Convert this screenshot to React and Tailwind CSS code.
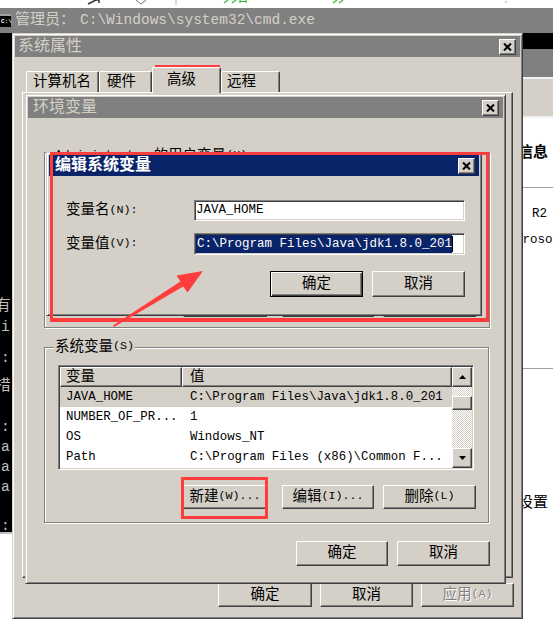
import React from "react";

const FONT = "font-['Liberation_Mono','Noto_Sans_CJK_SC',monospace]";
const WIN =
  "border border-t-[#d4d0c8] border-l-[#d4d0c8] border-r-[#404040] border-b-[#404040] shadow-[inset_1px_1px_0_#ffffff,inset_-1px_-1px_0_#808080] bg-[#d4d0c8]";
const BTN =
  "border border-t-white border-l-white border-r-[#404040] border-b-[#404040] shadow-[inset_-1px_-1px_0_#808080] bg-[#d4d0c8]";
const DEF_BTN =
  "border border-black shadow-[inset_1px_1px_0_#ffffff,inset_-1px_-1px_0_#404040,inset_-2px_-2px_0_#808080] bg-[#d4d0c8]";
const SUNKEN =
  "border border-t-[#808080] border-l-[#808080] border-r-white border-b-white shadow-[inset_1px_1px_0_#404040,inset_-1px_-1px_0_#d4d0c8] p-[1px]";
const GROUP =
  "relative border border-[#808080] shadow-[inset_1px_1px_0_#ffffff,1px_1px_0_#ffffff]";

// CJK glyphs are wider than the mono latin ones in the original bitmap font
function Zh({ children, className = "" }) {
  return <span className={`text-[14.5px] leading-none ${className}`}>{children}</span>;
}
function En({ children, className = "" }) {
  return <span className={`text-[11.7px] leading-none ${className}`}>{children}</span>;
}

function Button({ children, className = "", primary = false }) {
  return (
    <div className={`flex items-center justify-center ${primary ? DEF_BTN : BTN} ${className}`}>
      {children}
    </div>
  );
}

function CloseBox() {
  return (
    <div className={`flex items-center justify-center w-[17px] h-[16px] ${BTN}`}>
      <svg width="9" height="8" viewBox="0 0 9 8">
        <path d="M1 0.5 L8 7.5 M8 0.5 L1 7.5" stroke="#000" strokeWidth="2" />
      </svg>
    </div>
  );
}

function TitleBar({ title, active = false, className = "" }) {
  return (
    <div
      className={`flex items-center justify-between h-[21px] pr-[4px] shrink-0 ${
        active ? "bg-[#0a246a] text-white font-bold" : "bg-[#808080] text-[#d4d0c8]"
      } ${className}`}
    >
      <span className="text-[16px] leading-none">{title}</span>
      <CloseBox />
    </div>
  );
}

function Arrow({ down = false }) {
  return (
    <svg width="7" height="4" viewBox="0 0 7 4">
      {down ? <path d="M0 0 H7 L3.5 4 Z" fill="#000" /> : <path d="M0 4 H7 L3.5 0 Z" fill="#000" />}
    </svg>
  );
}

function TopStrip() {
  return (
    <svg className="absolute left-0 top-0" width="553" height="8" viewBox="0 0 553 8">
      <path d="M88 4 L96 0 M94 0 L99 0 L99 3" stroke="#333" strokeWidth="1.5" fill="none" />
      <path d="M136 0 L141 4 L146 0" stroke="#777" strokeWidth="1" fill="none" />
      <path d="M176 0 V5" stroke="#bbb" strokeWidth="1" />
      <path d="M224 3 L228 0 M232 3 L236 0 M240 0 V3 M246 0 V3 M240 1.5 H246" stroke="#3bb33b" strokeWidth="1.2" fill="none" />
      <path d="M333 3 L337 0 M339 3 L343 0" stroke="#3bb33b" strokeWidth="1.2" fill="none" />
      <path d="M505 3 L507 1" stroke="#999" strokeWidth="1" />
    </svg>
  );
}

function CmdWindow() {
  return (
    <div className="absolute left-0 top-[8px] w-[600px] h-[526px] bg-black flex flex-col border-b-2 border-b-[#c0c0c0]">
      <div className="h-[25px] bg-[#808080] flex items-center text-[#d4d0c8] shrink-0">
        <div className="w-[11px] h-[13px] bg-black border-t-2 border-t-[#a0a0a0] flex items-end pl-[1px] pb-[2px]">
          <span className="text-[6px] leading-none text-white font-bold">C:\</span>
        </div>
        <span className="ml-[4px] text-[15px] leading-none">管理员：</span>
        <span className="ml-[5px] text-[14.5px] leading-none">C:\Windows\system32\cmd.exe</span>
      </div>
      <div className="flex flex-col pt-[263px] text-[#c0c0c0] text-[14.5px] leading-none">
        <div className="h-[20px] flex items-center -ml-[4px]">有</div>
        <div className="h-[20px] flex items-center mt-[1px] pl-[1px]">i</div>
        <div className="h-[20px] flex items-center mt-[11px] pl-[1px]">:</div>
        <div className="h-[20px] flex items-center mt-[8px] -ml-[4px]">措</div>
        <div className="h-[20px] flex items-center mt-[21px] pl-[1px]">:</div>
        <div className="h-[20px] flex items-center pl-[1px]">a</div>
        <div className="h-[20px] flex items-center pl-[1px]">a</div>
        <div className="h-[20px] flex items-center pl-[1px]">a</div>
        <div className="h-[20px] flex items-center mt-[19px] pl-[1px]">:</div>
      </div>
    </div>
  );
}

function SideWindow() {
  return (
    <div className="absolute left-[470px] top-[49px] w-[100px] h-[580px] bg-white flex flex-col">
      <div className="h-[28px] bg-[#808080] shrink-0" />
      <div className="h-[41px] bg-[#d4d0c8] border-t-2 border-t-[#f0f0f0] border-b-2 border-b-[#eeeeee] shrink-0" />
      <div className="mt-[27px] ml-[48px] h-[16px] flex items-center">
        <span className="text-[15px] font-bold leading-none">信息</span>
      </div>
      <div className="mt-[26px] h-px bg-[#a0a0a0]" />
      <div className="mt-[18px] ml-[62px] h-[16px] flex items-center text-[12.5px] leading-none">R2</div>
      <div className="mt-[10px] ml-[30px] h-[16px] flex items-center text-[12.5px] leading-none">Microsoft</div>
      <div className="mt-[120px] h-px bg-[#a0a0a0]" />
      <div className="mt-[126px] ml-[48px] h-[16px] flex items-center">
        <span className="text-[15px] leading-none">设置</span>
      </div>
    </div>
  );
}

function Tab({ children, className = "", selected = false }) {
  return (
    <div
      className={`flex items-center border border-b-0 border-t-white border-l-white border-r-[#404040] rounded-t-[2px] shadow-[inset_-1px_0_0_#808080] bg-[#d4d0c8] ${
        selected ? "h-[26px] -mb-px relative z-10" : "h-[21px]"
      } ${className}`}
    >
      {children}
    </div>
  );
}

function SystemProperties() {
  return (
    <div className={`absolute left-[12px] top-[33px] w-[511px] h-[586px] p-[2px] flex flex-col ${WIN}`}>
      <TitleBar title="系统属性" className="pl-[3px]" />
      <div className="mt-[10px] h-[25px] ml-[11px] flex items-end shrink-0">
        <Tab className="w-[73px] pl-[6px]"><Zh>计算机名</Zh></Tab>
        <Tab className="w-[53px] pl-[7px]"><Zh>硬件</Zh></Tab>
        <Tab className="w-[69px] pl-[14px]" selected><Zh>高级</Zh></Tab>
        <Tab className="w-[59px] pl-[5px]"><Zh>远程</Zh></Tab>
      </div>
      <div className={`ml-[7px] w-[491px] h-[486px] shrink-0 ${BTN}`} />
      <div className="mt-[5px] flex justify-end pr-[6px] gap-[8px]">
        <Button className="w-[94px] h-[24px]"><Zh>确定</Zh></Button>
        <Button className="w-[93px] h-[24px]"><Zh>取消</Zh></Button>
        <Button className="w-[93px] h-[24px] text-[#808080] [text-shadow:1px_1px_0_#ffffff]">
          <Zh>应用</Zh>
          <En>(A)</En>
        </Button>
      </div>
    </div>
  );
}

const rows = [
  { name: "JAVA_HOME", value: "C:\\Program Files\\Java\\jdk1.8.0_201", selected: true },
  { name: "NUMBER_OF_PR...", value: "1" },
  { name: "OS", value: "Windows_NT" },
  { name: "Path", value: "C:\\Program Files (x86)\\Common F..." },
];

function GroupButtons() {
  return (
    <div className="flex ml-[138px] h-[24px]">
      <Button className="w-[84px] h-[24px]"><Zh>新建</Zh><En>(W)...</En></Button>
      <Button className="ml-[15px] w-[92px] h-[24px]"><Zh>编辑</Zh><En>(I)...</En></Button>
      <Button className="ml-[9px] w-[93px] h-[24px]"><Zh>删除</Zh><En>(L)</En></Button>
    </div>
  );
}

function EnvVariables() {
  return (
    <div className={`absolute left-[25px] top-[94px] w-[481px] h-[490px] p-[2px] flex flex-col ${WIN}`}>
      <TitleBar title="环境变量" className="pl-[5px]" />

      <div className={`mt-[34px] ml-[16px] w-[446px] h-[176px] shrink-0 flex flex-col justify-end pb-[10px] ${GROUP}`}>
        <div className="absolute -top-[5px] left-[9px] h-[16px] px-[1px] bg-[#d4d0c8] flex items-center">
          <En className="text-[12px]">Administrator</En>
          <Zh className="ml-[5px]">的用户变量</Zh>
          <En>(U)</En>
        </div>
        <GroupButtons />
      </div>

      <div className={`mt-[19px] ml-[16px] w-[445px] h-[176px] shrink-0 flex flex-col ${GROUP}`}>
        <div className="absolute -top-[9px] left-[9px] h-[16px] px-[1px] bg-[#d4d0c8] flex items-center">
          <Zh>系统变量</Zh>
          <En>(S)</En>
        </div>
        <div className={`mt-[17px] ml-[13px] w-[416px] h-[105px] bg-white flex ${SUNKEN}`}>
          <div className="flex-1 flex flex-col">
            <div className="flex h-[20px] shrink-0">
              <div className={`w-[122px] flex items-center pl-[5px] ${BTN}`}><Zh>变量</Zh></div>
              <div className={`flex-1 flex items-center pl-[7px] ${BTN}`}><Zh>值</Zh></div>
            </div>
            {rows.map((r) => (
              <div
                key={r.name}
                className={`flex h-[20px] items-center text-[12.4px] leading-none ${
                  r.selected ? "bg-[#d4d0c8]" : ""
                }`}
              >
                <div className="w-[122px] pl-[6px]">{r.name}</div>
                <div className="pl-[8px] whitespace-nowrap">{r.value}</div>
              </div>
            ))}
          </div>
          <div className="w-[20px] flex flex-col">
            <div className={`h-[20px] flex items-center justify-center ${BTN}`}><Arrow /></div>
            <div className="flex-1 pt-[9px] bg-[repeating-conic-gradient(#d4d0c8_0%_25%,#ffffff_0%_50%)] bg-[length:2px_2px]">
              <div className={`h-[14px] ${BTN}`} />
            </div>
            <div className={`h-[20px] flex items-center justify-center ${BTN}`}><Arrow down /></div>
          </div>
        </div>
        <div className="mt-[15px]">
          <GroupButtons />
        </div>
      </div>

      <div className="mt-[18px] flex justify-end pr-[13px] gap-[9px]">
        <Button className="w-[92px] h-[25px]"><Zh>确定</Zh></Button>
        <Button className="w-[93px] h-[25px]"><Zh>取消</Zh></Button>
      </div>
    </div>
  );
}

function EditVariable() {
  return (
    <div className={`absolute left-[46px] top-[152px] w-[436px] h-[164px] p-[2px] flex flex-col ${WIN}`}>
      <TitleBar title="编辑系统变量" active className="pl-[6px]" />
      <div className="mt-[24px] pl-[17px] flex flex-col">
        <div className="flex items-center h-[21px]">
          <div className="w-[128px] flex items-center">
            <Zh>变量名</Zh>
            <En>(N):</En>
          </div>
          <div className={`w-[271px] h-[21px] bg-white flex items-center pl-[1px] text-[12.5px] leading-none ${SUNKEN}`}>
            JAVA_HOME
          </div>
        </div>
        <div className="flex items-center h-[22px] mt-[12px]">
          <div className="w-[128px] flex items-center">
            <Zh>变量值</Zh>
            <En>(V):</En>
          </div>
          <div className={`w-[271px] h-[22px] bg-white flex items-stretch text-[12.5px] leading-none ${SUNKEN}`}>
            <span className="bg-[#0a246a] text-white flex items-center pl-[1px] whitespace-nowrap">
              C:\Program Files\Java\jdk1.8.0_201
            </span>
            <span className="w-px bg-black my-[1px]" />
          </div>
        </div>
        <div className="mt-[16px] flex justify-end pr-[14px] gap-[9px]">
          <Button primary className="w-[93px] h-[26px]"><Zh>确定</Zh></Button>
          <Button className="w-[93px] h-[26px]"><Zh>取消</Zh></Button>
        </div>
      </div>
    </div>
  );
}

function Annotations() {
  return (
    <>
      <div className="absolute left-[155px] top-[65px] w-[65px] h-[26px] border-[3px] border-[#ff3d3d]" />
      <div className="absolute left-[50px] top-[152px] w-[439px] h-[170px] border-[3px] border-b-4 border-[#ff3d3d]" />
      <div className="absolute left-[181px] top-[477px] w-[87px] h-[42px] border-[3px] border-[#ff3d3d]" />
      <svg className="absolute left-0 top-0 pointer-events-none" width="553" height="622" viewBox="0 0 553 622">
        <polygon
          points="203,271 176.5,275.5 180.4,281.4 113,325.5 114,327 183.2,286.6 187.5,292.5"
          fill="#ff3d3d"
        />
      </svg>
    </>
  );
}

export default function App() {
  return (
    <div className={`relative w-[553px] h-[622px] overflow-hidden bg-white text-black ${FONT}`}>
      <TopStrip />
      <CmdWindow />
      <SideWindow />
      <SystemProperties />
      <EnvVariables />
      <EditVariable />
      <Annotations />
    </div>
  );
}
